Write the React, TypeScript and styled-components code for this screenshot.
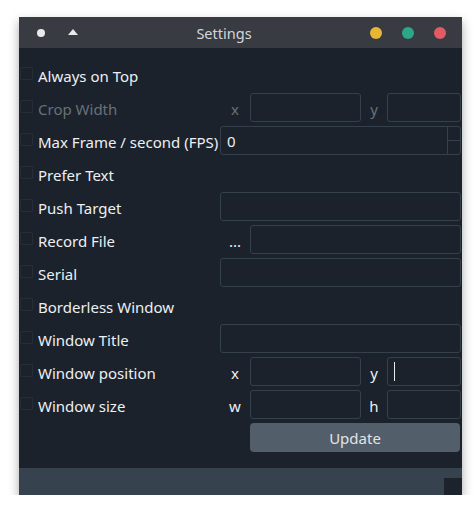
import React from "react";
import styled, { createGlobalStyle } from "styled-components";

const GlobalStyle = createGlobalStyle`
  html, body { margin: 0; padding: 0; background: #ffffff; }
  body { font-family: "Noto Sans", "Open Sans", sans-serif; font-size: 15px; }
  * { box-sizing: border-box; }
`;

const Window = styled.div`
  margin: 17px 0 0 19px;
  width: 443px;
  height: 478px;
  display: flex;
  flex-direction: column;
  overflow: hidden;
  box-shadow: 0 5px 10px rgba(0, 0, 0, 0.35);
`;

const TitleBar = styled.div`
  height: 31px;
  flex: none;
  background: #383b41;
  display: flex;
  align-items: center;
`;

const LeftGroup = styled.div`
  width: 59px;
  padding-left: 18px;
  display: flex;
  align-items: center;
  gap: 23px;
`;

const Dot = styled.span`
  width: 8px;
  height: 8px;
  border-radius: 50%;
  background: #e8e9eb;
`;

const Triangle = styled.span`
  width: 0;
  height: 0;
  border-left: 5px solid transparent;
  border-right: 5px solid transparent;
  border-bottom: 6px solid #e8e9eb;
  margin-top: -2px;
`;

const Title = styled.div`
  flex: 1;
  text-align: center;
  color: #d2d6db;
  font-size: 14.5px;
  line-height: 1;
  padding-top: 1px;
`;

const RightGroup = styled.div`
  width: 92px;
  padding-right: 16px;
  display: flex;
  align-items: center;
  gap: 20px;
`;

const Light = styled.span<{ $c: string }>`
  width: 12px;
  height: 12px;
  border-radius: 50%;
  background: ${(p) => p.$c};
`;

const Content = styled.div`
  flex: 1;
  background: #1b222c;
  padding: 12px 0 0 1px;
  display: grid;
  grid-template-columns: 200px 30px 111px 26px 74px;
  grid-auto-rows: 29px;
  row-gap: 4px;
  align-content: start;
`;

const CheckCell = styled.div<{ $disabled?: boolean }>`
  grid-column: 1;
  display: flex;
  align-items: center;
  color: ${(p) => (p.$disabled ? "#6a7077" : "#edf0f2")};
  font-size: 15px;
  white-space: nowrap;
  padding-top: 2px;
`;

const Box = styled.span`
  width: 13px;
  height: 13px;
  flex: none;
  border: 1px solid #252d36;
  border-radius: 1px;
  margin-right: 5px;
  margin-top: -4px;
`;

const SmallLabel = styled.div<{ $disabled?: boolean; $col: number }>`
  grid-column: ${(p) => p.$col};
  display: flex;
  align-items: center;
  justify-content: center;
  color: ${(p) => (p.$disabled ? "#6a7077" : "#edf0f2")};
  font-size: 15px;
  padding-top: 2px;
`;

const Field = styled.div<{ $from: number; $to: number }>`
  grid-column: ${(p) => p.$from} / ${(p) => p.$to};
  border: 1px solid #34404b;
  border-radius: 3px;
  display: flex;
  align-items: center;
  padding-left: 6px;
  color: #edf0f2;
  font-size: 15px;
  overflow: hidden;
`;

const FieldText = styled.span`
  flex: 1;
`;

const Spin = styled.div`
  width: 13px;
  align-self: stretch;
  border-left: 1px solid #34404b;
  display: flex;
  flex-direction: column;
`;

const SpinHalf = styled.div`
  flex: 1;
  & + & {
    border-top: 1px solid #34404b;
  }
`;

const Caret = styled.span`
  width: 1px;
  height: 19px;
  background: #e8eaec;
`;

const Spacer = styled.div`
  grid-column: 2 / 6;
`;

const UpdateButton = styled.button`
  grid-column: 3 / 6;
  margin-right: 1px;
  border: none;
  border-radius: 4px;
  background: #525e69;
  color: #e0e4e8;
  font-family: "Noto Sans", "Open Sans", sans-serif;
  font-size: 15px;
  padding: 1px 0 0;
`;

const StatusBar = styled.div`
  height: 27px;
  flex: none;
  background: #36434e;
  display: flex;
  justify-content: flex-end;
  align-items: flex-end;
`;

const SizeGrip = styled.div`
  width: 18px;
  height: 17px;
  background: #1c232d;
`;

const Check: React.FC<{ label: string; disabled?: boolean }> = ({ label, disabled }) => (
  <CheckCell $disabled={disabled}>
    <Box />
    {label}
  </CheckCell>
);

export default function App() {
  return (
    <>
      <GlobalStyle />
      <Window>
        <TitleBar>
          <LeftGroup>
            <Dot />
            <Triangle />
          </LeftGroup>
          <Title>Settings</Title>
          <RightGroup>
            <Light $c="#e7b634" />
            <Light $c="#2ba787" />
            <Light $c="#e25a63" />
          </RightGroup>
        </TitleBar>
        <Content>
          <Check label="Always on Top" />
          <Spacer />

          <Check label="Crop Width" disabled />
          <SmallLabel $col={2} $disabled>x</SmallLabel>
          <Field $from={3} $to={4} />
          <SmallLabel $col={4} $disabled>y</SmallLabel>
          <Field $from={5} $to={6} />

          <Check label="Max Frame / second (FPS)" />
          <Field $from={2} $to={6}>
            <FieldText>0</FieldText>
            <Spin>
              <SpinHalf />
              <SpinHalf />
            </Spin>
          </Field>

          <Check label="Prefer Text" />
          <Spacer />

          <Check label="Push Target" />
          <Field $from={2} $to={6} />

          <Check label="Record File" />
          <SmallLabel $col={2}>...</SmallLabel>
          <Field $from={3} $to={6} />

          <Check label="Serial" />
          <Field $from={2} $to={6} />

          <Check label="Borderless Window" />
          <Spacer />

          <Check label="Window Title" />
          <Field $from={2} $to={6} />

          <Check label="Window position" />
          <SmallLabel $col={2}>x</SmallLabel>
          <Field $from={3} $to={4} />
          <SmallLabel $col={4}>y</SmallLabel>
          <Field $from={5} $to={6}>
            <Caret />
          </Field>

          <Check label="Window size" />
          <SmallLabel $col={2}>w</SmallLabel>
          <Field $from={3} $to={4} />
          <SmallLabel $col={4}>h</SmallLabel>
          <Field $from={5} $to={6} />

          <UpdateButton>Update</UpdateButton>
        </Content>
        <StatusBar>
          <SizeGrip />
        </StatusBar>
      </Window>
    </>
  );
}
